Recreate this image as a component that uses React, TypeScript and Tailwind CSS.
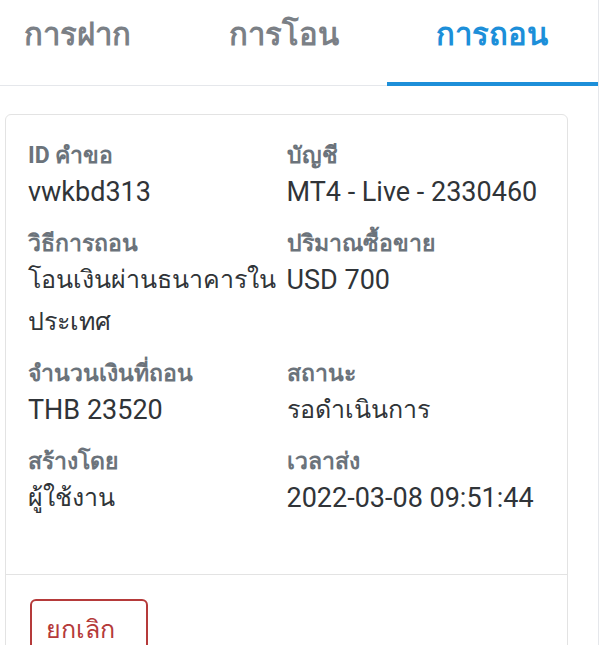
import React from 'react';

const tabs = [
  { key: 'deposit', label: 'การฝาก' },
  { key: 'transfer', label: 'การโอน' },
  { key: 'withdraw', label: 'การถอน' },
];

const rows: { label: string; value: string }[][] = [
  [
    { label: 'ID คำขอ', value: 'vwkbd313' },
    { label: 'บัญชี', value: 'MT4 - Live - 2330460' },
  ],
  [
    { label: 'วิธีการถอน', value: 'โอนเงินผ่านธนาคารในประเทศ' },
    { label: 'ปริมาณซื้อขาย', value: 'USD 700' },
  ],
  [
    { label: 'จำนวนเงินที่ถอน', value: 'THB 23520' },
    { label: 'สถานะ', value: 'รอดำเนินการ' },
  ],
  [
    { label: 'สร้างโดย', value: 'ผู้ใช้งาน' },
    { label: 'เวลาส่ง', value: '2022-03-08 09:51:44' },
  ],
];

// thai glyphs come out a bit larger than the latin ones at the same size
const isThai = (s: string) => /[\u0E00-\u0E7F]/.test(s);

export default function App() {
  const active = 'withdraw';

  return (
    <div className="h-[645px] w-[600px] overflow-hidden bg-white font-['Roboto','Noto_Sans',sans-serif]">
      <div className="w-[599px] h-full border-r border-gray-200">
        {/* tabs */}
        <div className="flex h-[86px] -ml-[26px]">
          {tabs.map((t) => {
            const isActive = t.key === active;
            return (
              <div
                key={t.key}
                className={
                  isActive
                    ? 'flex w-[212px] items-center justify-center border-b-4 border-[#1d8fd9] pb-[11px] text-[31px] font-bold text-[#1d8fd9]'
                    : 'flex w-[207px] items-center justify-center border-b border-gray-200 pb-[14px] text-[31px] font-bold text-[#7b8086]'
                }
              >
                {t.label}
              </div>
            );
          })}
        </div>

        {/* detail card */}
        <div className="ml-[5px] mt-[28px] w-[563px] rounded-md border border-[#e3e3e3]">
          <div className="px-[22px] pt-[26px] pb-[55px]">
            <div className="flex flex-col gap-4">
              {rows.map((row, i) => (
                <div key={i} className="grid grid-cols-2">
                  {row.map((cell) => (
                    <div key={cell.label}>
                      <div className="text-[23px] font-bold leading-[30px] text-[#6b737b]">
                        {cell.label}
                      </div>
                      <div
                        className={
                          isThai(cell.value)
                            ? 'text-[25px] leading-[42px] text-[#303438]'
                            : 'text-[27px] leading-[42px] text-[#303438]'
                        }
                      >
                        {cell.value}
                      </div>
                    </div>
                  ))}
                </div>
              ))}
            </div>
          </div>
          <div className="border-t border-[#e3e3e3] px-[24px] pt-[24px] pb-4">
            <button
              type="button"
              className="flex h-[62px] w-[118px] items-center rounded-md border-2 border-[#b53a3a] px-[14px] text-[25px] text-[#b53a3a]"
            >
              ยกเลิก
            </button>
          </div>
        </div>
      </div>
    </div>
  );
}
